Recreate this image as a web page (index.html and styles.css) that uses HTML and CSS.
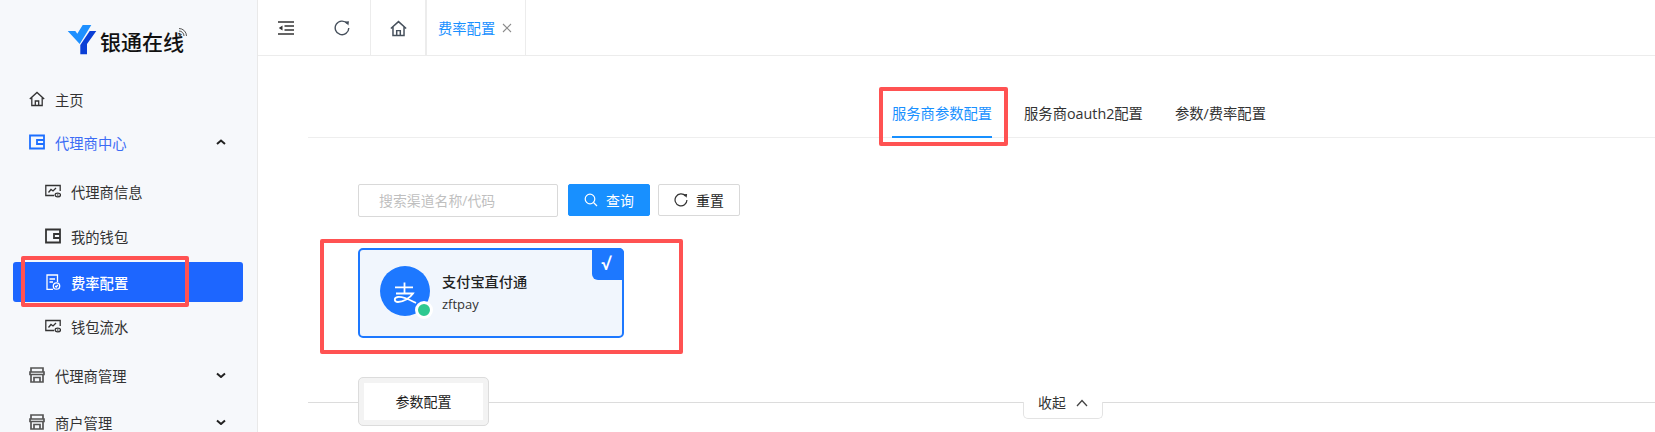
FILE: index.html
```html
<!DOCTYPE html>
<html lang="zh">
<head>
<meta charset="utf-8">
<title>费率配置</title>
<link rel="stylesheet" href="styles.css">
</head>
<body>
<div class="app">
  <aside class="sidebar">
    <div class="logo">
      <svg class="logo-mark" viewBox="0 0 30 30" width="30" height="30">
        <path fill="#1e90ff" d="M.7 6H8.300L10.300 8.700 15.700 0H24.300L12.700 19Z"/>
        <path fill="#0a3fd6" d="M29.300 6H22.700L13.300 20V29.300H20V19Z"/>
      </svg>
      <span class="logo-text">银通在线</span>
      <svg class="logo-wifi" viewBox="0 0 10 10" width="10" height="10">
        <g fill="none" stroke="#555" stroke-width="1"><path d="M1 4a5 5 0 0 1 5 5"/><path d="M1 1.500a7.500 7.500 0 0 1 7.500 7.500"/></g>
        <circle cx="2" cy="8" r="1.200" fill="#555"/>
      </svg>
    </div>
    <nav class="menu">
      <a class="item top h1">
        <svg class="ic" viewBox="0 0 16 16"><path class="st" d="M.8 8 8 1.500 15.200 8M2.800 6.500V14.500H13.200V6.500M6.300 14.500V10H9.700V14.500"/></svg>
        <span>主页</span>
      </a>
      <a class="item top open h2">
        <svg class="ic blue" viewBox="0 0 16 16"><path class="st2" d="M1 1.500H15V14.500H1ZM15 6H8V10H15"/></svg>
        <span>代理商中心</span>
        <svg class="caret" viewBox="0 0 10 6"><path d="M1 5 5 1.500 9 5"/></svg>
      </a>
      <a class="item sub h3">
        <svg class="ic" viewBox="0 0 16 16"><path class="st" d="M9 12.500H.8V2.500H15.200V8M3.500 9.500 6 6.500 8 8 11 5"/><ellipse class="st" cx="12.800" cy="12" rx="2.700" ry="1.800"/><circle cx="12.800" cy="12" r=".8" fill="#333"/></svg>
        <span>代理商信息</span>
      </a>
      <a class="item sub h4">
        <svg class="ic" viewBox="0 0 16 16"><path class="st2" d="M1 1.500H15V14.500H1ZM15 6H9V10H15"/></svg>
        <span>我的钱包</span>
      </a>
      <a class="item sub active">
        <svg class="ic" viewBox="0 0 16 16"><path class="st white" d="M12.500 8V1H2V15.500H8M4.500 5H10M4.500 8H8"/><circle class="st white" cx="11.500" cy="12" r="3.200"/><path class="st white" d="M10.200 12 11.200 13 12.800 11"/></svg>
        <span>费率配置</span>
      </a>
      <a class="item sub h5">
        <svg class="ic" viewBox="0 0 16 16"><path class="st" d="M9 12.500H.8V2.500H15.200V8M3.500 9.500 6 6.500 8 8 11 5"/><ellipse class="st" cx="12.800" cy="12" rx="2.700" ry="1.800"/><circle cx="12.800" cy="12" r=".8" fill="#333"/></svg>
        <span>钱包流水</span>
      </a>
      <a class="item top h6">
        <svg class="ic" viewBox="0 0 16 16"><path class="st3" d="M2 1H14V5H2ZM1 5H15V7.500H1ZM2 7.500V15H14V7.500M5 15V10.500H11V15"/></svg>
        <span>代理商管理</span>
        <svg class="caret" viewBox="0 0 10 6"><path d="M1 1.500 5 5 9 1.500"/></svg>
      </a>
      <a class="item top h7">
        <svg class="ic" viewBox="0 0 16 16"><path class="st3" d="M2 1H14V5H2ZM1 5H15V7.500H1ZM2 7.500V15H14V7.500M5 15V10.500H11V15"/></svg>
        <span>商户管理</span>
        <svg class="caret" viewBox="0 0 10 6"><path d="M1 1.500 5 5 9 1.500"/></svg>
      </a>
    </nav>
    <div class="mark mark-side"></div>
  </aside>

  <main class="main">
    <header class="topbar">
      <div class="tool tool-fold">
        <svg viewBox="0 0 16 14" width="16" height="14"><path class="st1" d="M0 1H16M6.500 5H16M6.500 9H16M0 13H16"/><path d="M4.500 4.500V9.500L.8 7Z" fill="#333"/></svg>
      </div>
      <div class="tool tool-refresh">
        <svg viewBox="0 0 16 16" width="16" height="16"><path class="st-grey" d="M13.200 3.500A6.800 6.800 0 1 0 14.800 8"/><path d="M10.800 1.500 15 1.200 14.400 5.500Z" fill="#46505c"/></svg>
      </div>
      <div class="tool tool-home">
        <svg viewBox="0 0 16 16" width="17" height="17"><path class="st-grey" d="M.8 8 8 1.500 15.200 8M2.800 6.500V14.500H13.200V6.500M6.300 14.500V10H9.700V14.500"/></svg>
      </div>
      <div class="tab-open">
        <span>费率配置</span>
        <svg viewBox="0 0 10 10" width="10" height="10"><path d="M1 1 9 9M9 1 1 9"/></svg>
      </div>
    </header>

    <section class="content">
      <div class="tabs">
        <a class="tab on">服务商参数配置<span class="mark mark-tab"></span></a>
        <a class="tab">服务商oauth2配置</a>
        <a class="tab">参数/费率配置</a>
      </div>

      <div class="search">
        <input class="field" placeholder="搜索渠道名称/代码">
        <button class="btn primary">
          <svg viewBox="0 0 14 14" width="14" height="14"><circle cx="6" cy="6" r="4.800"/><path d="M9.500 9.500 13 13"/></svg>
          查询
        </button>
        <button class="btn">
          <svg viewBox="0 0 16 16" width="14" height="14"><path class="st-dark" d="M13.200 3.500A6.800 6.800 0 1 0 14.800 8"/><path d="M10.800 1.500 15 1.200 14.400 5.500Z" fill="#333"/></svg>
          重置
        </button>
      </div>

      <div class="card">
        <div class="avatar">
          <svg viewBox="0 0 50 50" width="50" height="50"><path d="M15 21.300H33M24.500 16.500V27M16 27.500H33C30 32 23 36 18 36 14 36 13.500 31.500 18 31 24 30.500 30 34 36 37" fill="none" stroke="#fff" stroke-width="1.800"/></svg>
          <i class="dot"></i>
        </div>
        <div class="card-text">
          <b>支付宝直付通</b>
          <span>zftpay</span>
        </div>
        <em class="tick">√</em>
        <div class="mark mark-card"></div>
      </div>

      <div class="divider">
        <button class="param"><span>参数配置</span></button>
        <div class="collapse">
          收起
          <svg viewBox="0 0 12 8" width="12" height="8"><path d="M1 7 6 1.500 11 7"/></svg>
        </div>
      </div>
    </section>
  </main>
</div>
</body>
</html>
```
FILE: styles.css
```css
* { box-sizing: border-box; }
html, body { margin: 0; height: 100%; overflow: hidden; background: #fff; }
body { font-family: "Open Sans", "Noto Sans CJK SC", sans-serif; font-size: 14.3px; color: #262626; }
.app { display: flex; height: 432px; overflow: hidden; }

.st { fill: none; stroke: #333; stroke-width: 1.300; }
.st1 { fill: none; stroke: #333; stroke-width: 1.300; }
.st2 { fill: none; stroke: #333; stroke-width: 1.800; }
.st3 { fill: none; stroke: #555; stroke-width: 1.700; }
.st.white { stroke: #fff; }
.st-grey { fill: none; stroke: #46505c; stroke-width: 1.400; }
.st-dark { fill: none; stroke: #333; stroke-width: 1.400; }

.sidebar { position: relative; flex: 0 0 258px; background: #f6f8fb; border-right: 1px solid #e9e9e9; }
.logo { position: relative; display: flex; align-items: center; height: 55px; padding: 25px 0 0 67px; }
.logo-mark { flex: none; }
.logo-text { margin-left: 3px; font-size: 21px; font-weight: 500; color: #111; line-height: 1; position: relative; top: 2px; }
.logo-wifi { position: absolute; left: 178px; top: 27px; }

.menu { display: flex; flex-direction: column; padding-top: 15px; }
.item { display: flex; align-items: center; height: 40px; margin: 0 13px; flex: none; color: #333; }
.top { padding-left: 16px; }
.sub { padding-left: 32px; }
.ic { width: 16px; height: 16px; margin-right: 10px; flex: none; }
.item.open { color: #3c6cf5; }
.blue .st2 { stroke: #1d6fff; }
.caret { width: 10px; height: 6px; margin-left: auto; margin-right: 18px; fill: none; stroke: #222; stroke-width: 2; }
.h1 { margin-top: 9px; }
.h2 { margin-top: 3px; }
.h3 { margin-top: 9px; }
.h4 { margin-top: 5px; }
.active { margin-top: 6px; margin-right: 14px; background: #1d66ff; border-radius: 3px; color: #fff; font-weight: 500; }
.h5 { margin-top: 4px; }
.h6 { margin-top: 9px; }
.h7 { margin-top: 7px; }

.main { flex: 1; min-width: 0; }
.topbar { display: flex; height: 56px; border-bottom: 1px solid #ececec; }
.tool { display: flex; align-items: center; justify-content: center; height: 55px; }
.tool-fold { width: 56px; }
.tool-refresh { width: 57px; border-right: 1px solid #ececec; }
.tool-home { width: 56px; border-right: 2px solid #ececec; padding-top: 1px; }
.tab-open { display: flex; align-items: center; height: 55px; width: 99px; padding-left: 11px; gap: 7px; border-right: 1px solid #ececec; color: #1890ff; font-size: 14.300px; }
.tab-open svg { fill: none; stroke: #8c8c8c; stroke-width: 1.100; }

.content { padding: 0 0 0 50px; }
.tabs { display: flex; justify-content: flex-start; height: 82px; padding: 25px 0 0 584px; border-bottom: 1px solid #eee; }
.tab { position: relative; height: 57px; line-height: 66px; margin-right: 32px; white-space: nowrap; color: #333; }
.tab.on { color: #1890ff; border-bottom: 2px solid #1890ff; height: 57px; }

.search { display: flex; margin: 46px 0 0 50px; height: 33px; }
.field { width: 200px; height: 33px; border: 1px solid #d9d9d9; border-radius: 2px; padding: 0 0 0 20px; font: inherit; font-size: 13.900px; outline: none; background: #fff; }
.field::placeholder { color: #bfbfbf; }
.btn { display: inline-flex; align-items: center; justify-content: center; gap: 8px; width: 82px; height: 32px; margin-left: 10px; padding: 0; background: #fff; border: 1px solid #d9d9d9; border-radius: 2px; font: inherit; font-size: 13.900px; color: #262626; }
.btn + .btn { margin-left: 8px; }
.btn.primary { background: #1890ff; border-color: #1890ff; color: #fff; }
.btn.primary svg { fill: none; stroke: #fff; stroke-width: 1.200; }

.card { position: relative; display: flex; align-items: center; width: 266px; height: 90px; margin: 31px 0 0 50px; padding: 0 0 4px 20px; background: #f1f6fd; border: 2px solid #1d78ff; border-radius: 5px; }
.avatar { position: relative; flex: none; width: 50px; height: 50px; background: #1d78ff; border-radius: 50%; }
.avatar svg { display: block; }
.dot { position: absolute; right: -3px; bottom: -3px; width: 18px; height: 18px; background: #2ec990; border: 3px solid #fff; border-radius: 50%; }
.card-text { display: flex; flex-direction: column; margin-left: 12px; padding-top: 4px; }
.card-text b { font-size: 14.200px; font-weight: 500; line-height: 21px; color: #222; }
.card-text span { font-size: 13px; line-height: 24px; color: #333; }
.tick { position: absolute; top: -2px; right: -2px; width: 32px; height: 32px; padding-right: 4px; background: #1d78ff; border-radius: 0 5px 0 6px; color: #fff; font-style: normal; font-weight: 700; font-size: 17px; line-height: 32px; text-align: center; }

.divider { position: relative; display: flex; height: 50px; margin-top: 39px; }
.divider::before { content: ""; position: absolute; left: 0; right: 0; top: 25px; height: 1px; background: #dcdcdc; }
.param { position: relative; width: 131px; height: 49px; margin-left: 50px; padding: 5px; background: #f3f3f3; border: 1px solid #dcdcdc; border-radius: 5px; font: inherit; font-size: 14px; color: #222; }
.param span { display: block; height: 100%; line-height: 37px; background: #fff; }
.collapse { position: absolute; left: 715px; top: 9px; display: flex; align-items: center; justify-content: center; gap: 10px; width: 80px; height: 33px; background: #fff; font-size: 13.900px; line-height: 1; color: #333; }
.collapse::after { content: ""; position: absolute; left: 0; right: 0; top: 16px; bottom: 0; border: 1px solid #e3e3e3; border-top: 0; border-radius: 0 0 5px 5px; }
.collapse svg { fill: none; stroke: #444; stroke-width: 1.300; }

.mark { position: absolute; border: 4px solid #ff5252; border-radius: 2px; pointer-events: none; }
.mark-side { left: 21px; top: 256px; width: 168px; height: 51px; }
.mark-tab { left: -13px; top: 6px; width: 129px; height: 59px; }
.mark-card { left: -40px; top: -11px; width: 363px; height: 115px; }
```
